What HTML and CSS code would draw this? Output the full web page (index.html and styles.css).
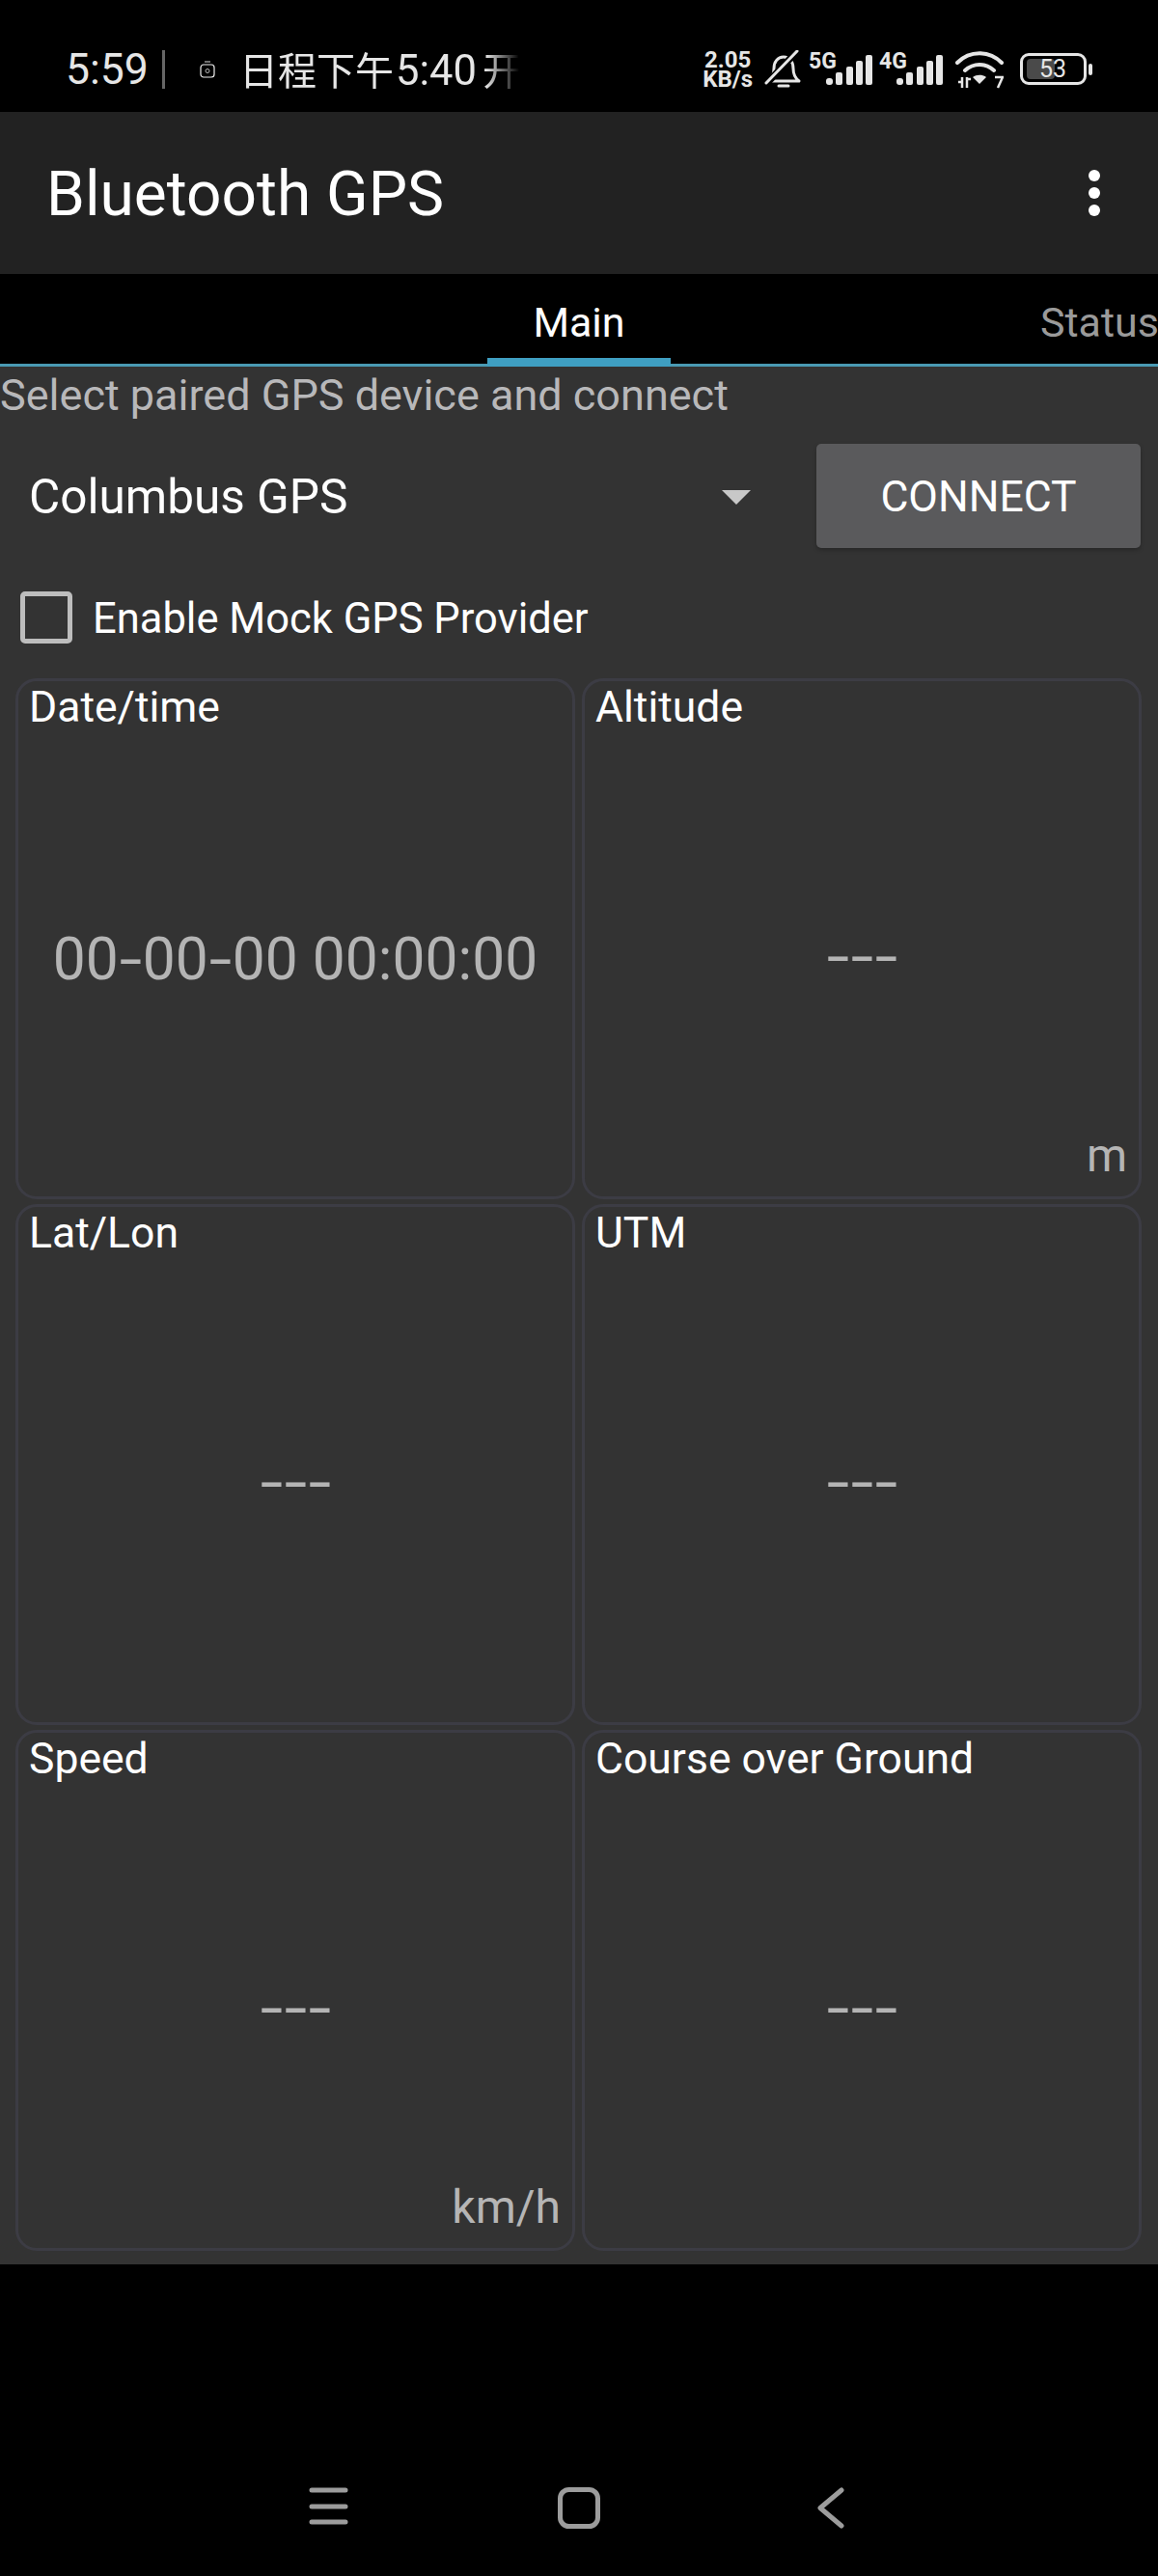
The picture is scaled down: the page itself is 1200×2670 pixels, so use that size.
FILE: index.html
```html
<!DOCTYPE html>
<html lang="en">
<head>
<meta charset="utf-8">
<title>Bluetooth GPS</title>
<link rel="stylesheet" href="styles.css">
</head>
<body>
<header class="statusbar">
  <div class="status-left">
    <span class="clock">5:59</span>
    <span class="divider"></span>
    <svg class="watch" viewBox="0 0 16 18" width="16" height="18"><path d="M5 1h6" stroke="#ddd" stroke-width="1" fill="none"/><rect x="1" y="4" width="14" height="13" rx="3" fill="none" stroke="#eee" stroke-width="1.2"/><circle cx="8" cy="10.500" r="2" fill="none" stroke="#bbb" stroke-width="1"/></svg>
    <span class="ticker">日程下午<span class="ticker-time">5:40</span>开</span>
  </div>
  <div class="status-right">
    <span class="speed"><span>2.05</span><span>KB/s</span></span>
    <svg class="bell" viewBox="0 0 40 40" width="40" height="40"><path d="M4 32c4-3 6-6 6-13 0-7 4-12 10-12s10 5 10 12c0 7 2 10 6 13z" fill="none" stroke="#e6e6e6" stroke-width="3" stroke-linejoin="round"/><path d="M15 37h10" stroke="#e6e6e6" stroke-width="3" stroke-linecap="round"/><path d="M3 34 33 2" stroke="#000" stroke-width="7"/><path d="M2 34 34 1" stroke="#e6e6e6" stroke-width="3" stroke-linecap="round"/></svg>
    <span class="signal">
      <span class="net">5G</span>
      <svg viewBox="0 0 48 31" width="48" height="31"><g fill="#e6e6e6"><rect x="0" y="24" width="7" height="7" rx="3"/><rect x="10" y="18" width="7" height="13" rx="2"/><rect x="21" y="12" width="7" height="19" rx="2"/><rect x="31" y="6" width="7" height="25" rx="2"/><rect x="41" y="0" width="7" height="31" rx="2"/></g></svg>
    </span>
    <span class="signal">
      <span class="net">4G</span>
      <svg viewBox="0 0 48 31" width="48" height="31"><g fill="#e6e6e6"><rect x="0" y="24" width="7" height="7" rx="3"/><rect x="10" y="18" width="7" height="13" rx="2"/><rect x="21" y="12" width="7" height="19" rx="2"/><rect x="31" y="6" width="7" height="25" rx="2"/><rect x="41" y="0" width="7" height="31" rx="2"/></g></svg>
    </span>
    <svg class="wifi" viewBox="0 0 50 40" width="50" height="40"><g fill="none" stroke="#e6e6e6" stroke-width="4" stroke-linecap="round"><path d="M2 13C15 0 35 0 48 13"/><path d="M10 21c9-8 21-8 30 0"/></g><path d="M18 28c4-3 10-3 14 0l-7 7z" fill="#e6e6e6"/><g stroke="#e6e6e6" stroke-width="2.500" fill="none"><path d="M3 33h4M7 28v11M12 28v11M12 30h4"/><path d="M41 28h8l-5 11"/></g></svg>
    <span class="battery"><span class="battery-fill"></span><span class="battery-num">53</span></span>
    <span class="battery-nub"></span>
  </div>
</header>

<div class="appbar">
  <h1 class="app-title">Bluetooth GPS</h1>
  <div class="kebab"><span></span><span></span><span></span></div>
</div>

<nav class="tabs">
  <span class="tab tab-active">Main</span>
  <span class="tab tab-next">Status</span>
</nav>

<main class="content">
  <p class="hint">Select paired GPS device and connect</p>
  <div class="device-row">
    <div class="spinner">
      <span>Columbus GPS</span>
      <span class="arrow"></span>
    </div>
    <button class="connect">CONNECT</button>
  </div>
  <label class="mock">
    <span class="checkbox"></span>
    <span>Enable Mock GPS Provider</span>
  </label>
  <section class="grid">
    <article class="card"><h2>Date/time</h2><div class="value">00<span class="dash">-</span>00<span class="dash">-</span>00 00:00:00</div></article>
    <article class="card"><h2>Altitude</h2><div class="value value-empty"><span class="dash">-</span><span class="dash">-</span><span class="dash">-</span></div><div class="unit">m</div></article>
    <article class="card"><h2>Lat/Lon</h2><div class="value value-empty"><span class="dash">-</span><span class="dash">-</span><span class="dash">-</span></div></article>
    <article class="card"><h2>UTM</h2><div class="value value-empty"><span class="dash">-</span><span class="dash">-</span><span class="dash">-</span></div></article>
    <article class="card"><h2>Speed</h2><div class="value value-empty"><span class="dash">-</span><span class="dash">-</span><span class="dash">-</span></div><div class="unit">km/h</div></article>
    <article class="card"><h2>Course over Ground</h2><div class="value value-empty"><span class="dash">-</span><span class="dash">-</span><span class="dash">-</span></div></article>
  </section>
</main>

<footer class="navbar">
  <svg viewBox="0 0 41 39" width="41" height="39"><g stroke="#9c9c9c" stroke-width="5" stroke-linecap="round"><path d="M3 3h35M3 20h35M3 36h35"/></g></svg>
  <svg class="nav-home" viewBox="0 0 44 43" width="44" height="43"><rect x="2.500" y="2.500" width="39" height="38" rx="9" fill="none" stroke="#9c9c9c" stroke-width="5"/></svg>
  <svg viewBox="0 0 28 43" width="28" height="43"><path d="M25 3 3 21.500 25 40" fill="none" stroke="#9c9c9c" stroke-width="5" stroke-linecap="round" stroke-linejoin="round"/></svg>
</footer>
</body>
</html>
```
FILE: styles.css
```css
* { box-sizing: border-box; }
html, body { margin: 0; padding: 0; }
body { width: 1200px; height: 2670px; background: #000; color: #fff; font-family: Roboto, "Noto Sans CJK SC", sans-serif; overflow: hidden; }

.statusbar { height: 116px; background: #000; display: flex; justify-content: space-between; align-items: center; padding: 27px 68px 0 68px; color: #e6e6e6; }
.status-left { display: flex; align-items: center; }
.clock { font-size: 44.5px; width: 100px; padding-top: 1px; }
.divider { width: 3px; height: 40px; background: #666; }
.watch { margin-left: 36px; }
.ticker { font-size: 40px; margin-left: 25px; width: 290px; margin-top: -2px; white-space: nowrap; overflow: hidden; -webkit-mask-image: linear-gradient(to right, #000 88%, transparent 100%); mask-image: linear-gradient(to right, #000 88%, transparent 100%); }
.ticker-time { font-size: 43.500px; margin: 0 6px 0 2px; }
.status-right { display: flex; align-items: center; }
.speed { display: flex; flex-direction: column; font-size: 24px; font-weight: 700; line-height: 20px; margin-right: 12px; align-items: center; }
.bell { margin-right: -1px; }
.signal { position: relative; width: 73px; height: 36px; display: flex; justify-content: flex-end; align-items: flex-end; padding-bottom: 2px; }
.net { position: absolute; left: 7px; top: -4px; font-size: 23px; font-weight: 700; }
.wifi { margin-left: 13px; }
.battery { position: relative; width: 69px; height: 33px; border: 3px solid #e6e6e6; border-radius: 9px; margin-left: 17px; display: block; }
.battery-fill { position: absolute; left: 4px; top: 3px; width: 29px; height: 21px; background: #4a4a4a; border-radius: 4px; }
.battery-num { position: absolute; left: 17px; top: 0; line-height: 27px; font-size: 25px; }
.battery-nub { width: 4px; height: 12px; background: #e6e6e6; border-radius: 2px; margin-left: 2px; }

.appbar { height: 168px; background: #222; display: flex; align-items: center; justify-content: space-between; padding: 2px 60px 0 48px; }
.app-title { margin: 0; font-size: 64px; font-weight: 400; }
.kebab { display: flex; flex-direction: column; gap: 6px; margin-top: -2px; }
.kebab span { width: 12px; height: 12px; border-radius: 50%; background: #fff; }

.tabs { position: relative; height: 96px; background: #000; border-bottom: 3px solid #4a9ab3; }
.tab { position: absolute; top: 0; line-height: 101px; font-size: 43px; white-space: nowrap; }
.tab-active { left: 505px; width: 190px; height: 96px; text-align: center; border-bottom: 9px solid #3f9fc2; }
.tab-next { left: 1078px; color: #9a9a9a; }

.content { background: #333; height: 1967px; display: flex; flex-direction: column; }
.hint { margin: 0; font-size: 45px; line-height: 46px; color: #b8b8ba; padding-top: 7px; }
.device-row { display: flex; justify-content: space-between; align-items: center; margin-top: 27px; padding: 0 18px 0 30px; }
.spinner { width: 748px; display: flex; justify-content: space-between; align-items: center; font-size: 49.500px; line-height: 60px; padding-top: 2px; }
.arrow { width: 0; height: 0; border-left: 15px solid transparent; border-right: 15px solid transparent; border-top: 15px solid #c8c8c8; }
.connect { width: 336px; height: 108px; background: #5a5a5c; border: 0; border-radius: 5px; color: #fff; font: 400 44.500px Roboto, sans-serif; box-shadow: 0 2px 4px rgba(0,0,0,.25); padding: 2px 0 0; }
.mock { display: flex; align-items: center; margin-top: 45px; padding-left: 21px; font-size: 43.500px; }
.mock span:last-child { padding-top: 2px; }
.checkbox { width: 54px; height: 54px; border: 5px solid #bdbdbd; border-radius: 5px; margin-right: 21px; }
.grid { display: grid; grid-template-columns: 580px 580px; grid-auto-rows: 540px; column-gap: 7px; row-gap: 5px; padding-left: 16px; margin-top: 36px; }
.card { position: relative; border: 3px solid #3c3c44; border-radius: 22px; padding: 0 11px; display: flex; flex-direction: column; }
.card h2 { margin: 0; font-size: 44.500px; font-weight: 400; line-height: 50px; margin-top: 2px; }
.value { position: absolute; left: 0; right: 0; top: 255px; text-align: center; color: #b4b4b4; font-size: 60.500px; line-height: 68px; white-space: nowrap; }
.value-empty { top: 252px; }
.dash { display: inline-block; width: 25px; text-align: center; transform: scaleX(1.4); }
.unit { position: absolute; right: 12px; bottom: 14px; color: #b5b5b5; font-size: 48px; line-height: 56px; }

.navbar { height: 323px; background: #000; display: flex; align-items: flex-start; padding: 231px 0 0 320px; }
.nav-home { margin: 0 225px 0 217px; }
```
